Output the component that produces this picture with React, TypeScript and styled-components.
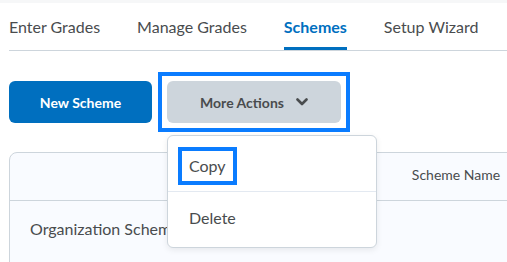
import React from 'react';
import styled, { createGlobalStyle } from 'styled-components';

const GlobalStyle = createGlobalStyle`
  html, body {
    margin: 0;
    padding: 0;
    background: #fff;
    overflow: hidden;
  }
  body {
    font-family: Lato, "Open Sans", Arial, sans-serif;
    color: #494c4e;
  }
`;

const TopStrip = styled.div`
  height: 3px;
  background: #f6f7f8;
`;

const Page = styled.div`
  padding-left: 9px;
`;

const TabBar = styled.div`
  display: flex;
  gap: 37px;
  border-bottom: 1px solid #cdd5dc;
`;

const Tab = styled.div<{ $active?: boolean }>`
  padding-top: 3px;
  height: 41px;
  line-height: 41px;
  font-size: 16px;
  font-weight: ${p => (p.$active ? 700 : 400)};
  color: ${p => (p.$active ? '#006fbf' : '#494c4e')};
  border-bottom: 3px solid ${p => (p.$active ? '#006fbf' : 'transparent')};
  white-space: nowrap;
`;

const ActionRow = styled.div`
  display: flex;
  align-items: center;
  gap: 6px;
  margin-top: 21px;
`;

const Button = styled.button<{ $primary?: boolean }>`
  display: flex;
  align-items: center;
  justify-content: center;
  gap: 12px;
  height: 42px;
  border: none;
  border-radius: 6px;
  font-family: Lato, Arial, sans-serif;
  font-size: 14px;
  font-weight: 700;
  cursor: pointer;
  background: ${p => (p.$primary ? '#006fbf' : '#cdd5dc')};
  color: ${p => (p.$primary ? '#fff' : '#494c4e')};
  width: ${p => (p.$primary ? '143px' : '174px')};
  padding: 0;
`;

const Highlight = styled.div`
  position: relative;
  border: 4px solid #0a7cff;
  padding: 5px;
`;

const Menu = styled.div`
  position: absolute;
  top: 59px;
  left: 5px;
  width: 208px;
  background: #fff;
  border: 1px solid #cdd5dc;
  border-radius: 6px;
  box-shadow: 0 2px 6px rgba(0, 0, 0, 0.08);
  padding: 4px 0;
  z-index: 10;
`;

const MenuItem = styled.div<{ $divider?: boolean }>`
  display: flex;
  align-items: center;
  height: 51px;
  padding: 0 10px;
  font-size: 16px;
  color: #494c4e;
  border-top: ${p => (p.$divider ? '1px solid #e3e9f1' : 'none')};
`;

const ItemLabel = styled.span<{ $marked?: boolean }>`
  border: 4px solid ${p => (p.$marked ? '#0a7cff' : 'transparent')};
  padding: 3px 7px;
  line-height: 24px;
`;

const Table = styled.div`
  margin-top: 20px;
  width: 892px;
  border: 1px solid #cdd5dc;
  border-radius: 8px;
  background: #f9fbff;
`;

const HeaderRow = styled.div`
  height: 47px;
  line-height: 43px;
  text-align: center;
  font-size: 14px;
  color: #494c4e;
  border-bottom: 1px solid #cdd5dc;
`;

const BodyRow = styled.div`
  padding: 16px 20px 30px;
  line-height: 24px;
  font-size: 16px;
  color: #494c4e;
`;

const Chevron = () => (
  <svg width="12" height="8" viewBox="0 0 12 8">
    <polyline points="1.5,1.5 6,6 10.5,1.5" fill="none" stroke="#494c4e" strokeWidth="2.6" strokeLinecap="round" strokeLinejoin="round" />
  </svg>
);

const App = () => {
  return (
    <>
      <GlobalStyle />
      <TopStrip />
      <Page>
        <TabBar>
          <Tab>Enter Grades</Tab>
          <Tab>Manage Grades</Tab>
          <Tab $active>Schemes</Tab>
          <Tab>Setup Wizard</Tab>
        </TabBar>
        <ActionRow>
          <Button $primary type="button">New Scheme</Button>
          <Highlight>
            <Button type="button">
              More Actions
              <Chevron />
            </Button>
            <Menu>
              <MenuItem>
                <ItemLabel $marked>Copy</ItemLabel>
              </MenuItem>
              <MenuItem $divider>
                <ItemLabel>Delete</ItemLabel>
              </MenuItem>
            </Menu>
          </Highlight>
        </ActionRow>
        <Table>
          <HeaderRow>Scheme Name</HeaderRow>
          <BodyRow>Organization Scheme</BodyRow>
        </Table>
      </Page>
    </>
  );
};

export default App;
